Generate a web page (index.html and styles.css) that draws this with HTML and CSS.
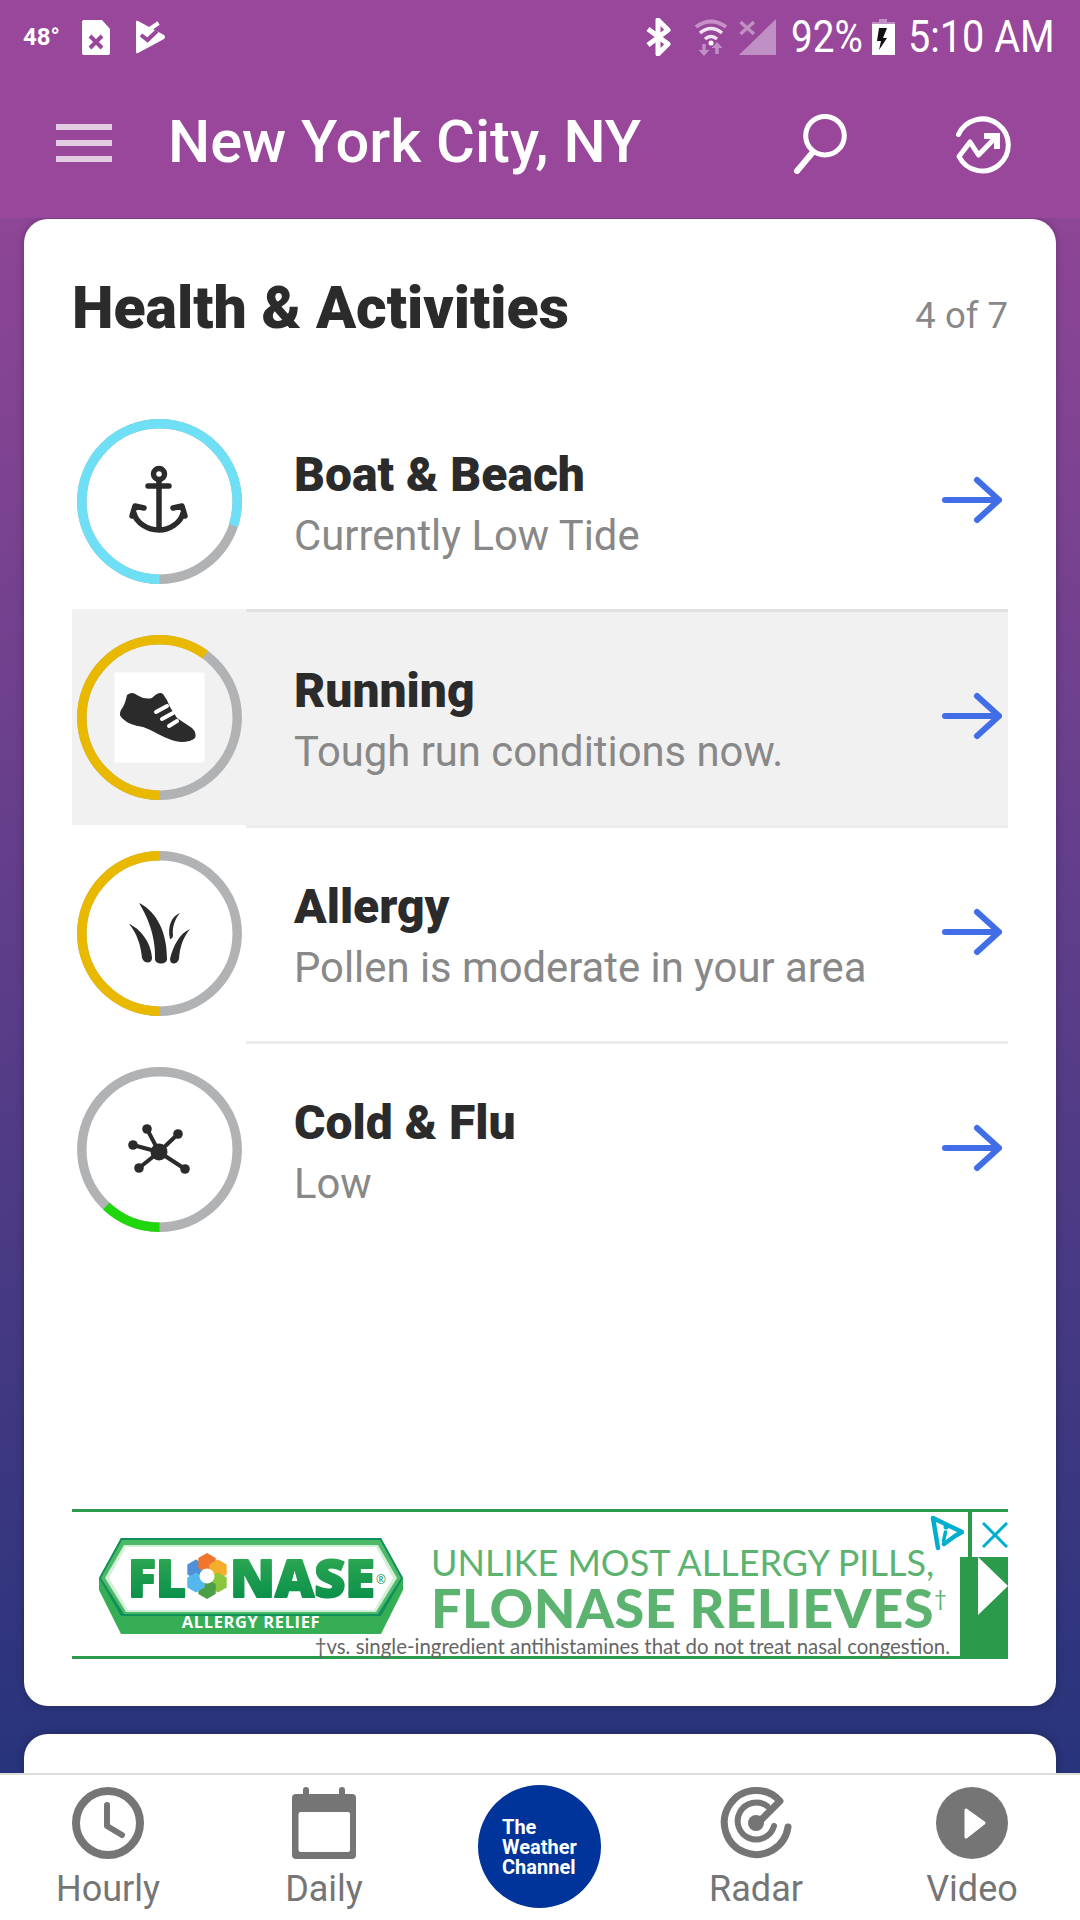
FILE: index.html
```html
<!DOCTYPE html>
<html lang="en">
<head>
<meta charset="utf-8">
<title>Health &amp; Activities</title>
<link rel="stylesheet" href="styles.css">
</head>
<body>
<div class="app">
  <div class="top">
    <div class="status">
      <span class="temp">48°</span>
      <svg class="st-sim" viewBox="0 0 28 35"><path class="w" d="M2 0H20L28 9V33Q28 35 26 35H2Q0 35 0 33V2Q0 0 2 0Z"/><path class="x" d="M8 16L20 28M20 16L8 28"/></svg>
      <svg class="st-check" viewBox="0 0 30 34"><path class="w" d="M1 2Q1 0 3 1L29 15Q31 17 29 19L3 33Q1 34 1 32Z"/><path class="x" d="M6 15L12.500 20L22 11"/><path class="arm" d="M12 11L23.500 3"/></svg>
      <div class="st-right">
        <svg class="st-bt" viewBox="0 0 26 38"><path class="ln" d="M3 11L23 26L13 36V2L23 12L3 27"/></svg>
        <svg class="st-wifi" viewBox="0 0 32 37"><path class="dim" d="M1 8Q16 -3 31 8"/><path class="wf" d="M5 14Q16 5 27 14M10 20Q16 15 22 20"/><circle class="w" cx="16" cy="24" r="2.500"/><path class="dim2" d="M9 25V32M22 35V28"/><path class="dimf" d="M3.500 31H14.500L9 37ZM16.500 29H27.500L22 23Z"/></svg>
        <svg class="st-signal" viewBox="0 0 37 36"><path class="dimf" d="M37 0V36H0Z"/><path class="dim3" d="M1.500 3L15 15M15 3L1.500 15"/></svg>
        <span class="st-text st-pct">92%</span>
        <svg class="st-bat" viewBox="0 0 23 36"><path class="dimf" d="M7 0H15V3H23V6H0V3H7Z"/><rect class="w" x="0" y="5" width="23" height="31"/><path class="bolt" d="M7 9H15L11 19H15L7 31L9 22H5Z"/></svg>
        <span class="st-text st-time">5:10 AM</span>
      </div>
    </div>
    <header class="bar">
      <div class="burger"><i></i><i></i><i></i></div>
      <h1 class="city">New York City, NY</h1>
      <svg class="bar-search" viewBox="0 0 56 60"><circle class="ln" cx="33" cy="21.700" r="19.300"/><path class="ln lc" d="M21 38L5 57"/></svg>
      <svg class="bar-share" viewBox="0 0 60 60"><path class="ln lc2" d="M2.500 20.500A26 26 0 1 1 3 42.500L14 28L22.500 41L40 23"/><path class="ln head" d="M28 22H41V35"/></svg>
    </header>
  </div>

  <main class="main">
    <section class="card card-health">
      <div class="card-head">
        <h2 class="card-title">Health &amp; Activities</h2>
        <span class="card-count">4 of 7</span>
      </div>
      <div class="list">
        <div class="row">
          <div class="ring">
            <svg viewBox="0 0 165 165">
              <circle class="track" cx="82.500" cy="82.500" r="77.700"/>
              <circle class="arc arc-cyan" cx="82.500" cy="82.500" r="77.700" pathLength="100" stroke-dasharray="80 100" transform="rotate(90 82.500 82.500)"/>
              <circle class="glyph-ln" cx="82" cy="55" r="5.500"/>
              <path class="glyph-ln" d="M71 67H92M82 62V111M57 94C59 104 71 111 82 111C92 111 104 104 106 94M55 97L58 87L67 89M108 97L105 87L96 89"/>
            </svg>
          </div>
          <div class="row-text"><div class="row-title">Boat &amp; Beach</div><div class="row-sub">Currently Low Tide</div></div>
          <svg class="go" viewBox="0 0 64 50"><path d="M4 25H58M36 5L58 25L36 45"/></svg>
        </div>
        <div class="row row-active">
          <div class="ring">
            <svg viewBox="0 0 165 165">
              <circle class="track" cx="82.500" cy="82.500" r="77.700"/>
              <circle class="arc arc-yellow" cx="82.500" cy="82.500" r="77.700" pathLength="100" stroke-dasharray="60 100" transform="rotate(90 82.500 82.500)"/>
              <rect class="tile" x="37.500" y="37.500" width="90" height="90"/>
              <path class="glyph" d="M50 60Q55 56 60 60Q68 65 75 63Q82 56 86 59Q90 64 93 72L100 83L115 93Q120 98 118 103Q114 107 104 107Q94 106 81 99Q72 94 66 92Q52 90 46 84Q41 80 44 75Q48 70 50 60Z"/>
              <path class="lace" d="M79 77L90 71M85 84L96 78M92 91L100 86"/>
            </svg>
          </div>
          <div class="row-text"><div class="row-title">Running</div><div class="row-sub">Tough run conditions now.</div></div>
          <svg class="go" viewBox="0 0 64 50"><path d="M4 25H58M36 5L58 25L36 45"/></svg>
        </div>
        <div class="row">
          <div class="ring">
            <svg viewBox="0 0 165 165">
              <circle class="track" cx="82.500" cy="82.500" r="77.700"/>
              <circle class="arc arc-yellow" cx="82.500" cy="82.500" r="77.700" pathLength="100" stroke-dasharray="50 100" transform="rotate(90 82.500 82.500)"/>
              <path class="glyph" d="M62 52C75 58 90 75 90 108C90 114 78 114 78 108C79 85 70 65 62 52Z"/>
              <path class="glyph" d="M52 73C62 77 74 90 75 107C75 113 67 113 65 107C64 95 60 82 52 73Z"/>
              <path class="glyph" d="M113 78C103 82 96 95 93 108C93 114 100 114 102 108C103 95 106 87 113 78Z"/>
              <path class="glyph" d="M103 62C95 65 90 75 93 88C95 88 96 86 96 84C95 76 98 68 103 62Z"/>
            </svg>
          </div>
          <div class="row-text"><div class="row-title">Allergy</div><div class="row-sub">Pollen is moderate in your area</div></div>
          <svg class="go" viewBox="0 0 64 50"><path d="M4 25H58M36 5L58 25L36 45"/></svg>
        </div>
        <div class="row">
          <div class="ring">
            <svg viewBox="0 0 165 165">
              <circle class="track" cx="82.500" cy="82.500" r="77.700"/>
              <circle class="arc arc-green" cx="82.500" cy="82.500" r="77.700" pathLength="100" stroke-dasharray="12 100" transform="rotate(90 82.500 82.500)"/>
              <path class="virus" d="M82 85L70 62M82 85L101 67M82 85L56 78M82 85L62 101M82 85L108 102"/>
              <circle class="glyph" cx="82" cy="85" r="8.500"/>
              <circle class="glyph" cx="70" cy="62" r="4.800"/><circle class="glyph" cx="101" cy="67" r="4.800"/><circle class="glyph" cx="56" cy="78" r="4.800"/><circle class="glyph" cx="62" cy="101" r="4.800"/><circle class="glyph" cx="108" cy="102" r="4.800"/>
            </svg>
          </div>
          <div class="row-text"><div class="row-title">Cold &amp; Flu</div><div class="row-sub">Low</div></div>
          <svg class="go" viewBox="0 0 64 50"><path d="M4 25H58M36 5L58 25L36 45"/></svg>
        </div>
      </div>

      <aside class="ad">
        <div class="ad-body">
          <div class="ad-main">
            <svg class="logo" viewBox="0 0 304 97">
              <defs>
                <linearGradient id="flo" x1="0" y1="0" x2="0" y2="1"><stop offset="0" stop-color="#39ae55"/><stop offset="1" stop-color="#008a48"/></linearGradient>
              </defs>
              <path class="l1" d="M0 40L22 0H282L304 40V52L282 96H22L0 52Z"/>
              <path class="l2" d="M0 40L22 0H282L304 40L282 78H22Z"/>
              <path class="l4" d="M2 40L23 2H281L302 40L279 76H25Z"/>
              <path class="l5" d="M6 40L25 7H279L298 40L277 74H27Z"/>
              <path class="l3" d="M10 40L27 9H277L294 40L275 72H29Z"/>
              <text class="logo-name" x="29" y="59" textLength="58" lengthAdjust="spacingAndGlyphs">FL</text>
              <text class="logo-name logo-o" x="89" y="59">O</text>
              <text class="logo-name" x="131" y="59" textLength="145" lengthAdjust="spacingAndGlyphs">NASE</text>
              <text class="logo-reg" x="277" y="46">®</text>
              <path class="p1" transform="translate(97 31.500)" d="M0 -10L8.700 -5V5L0 10L-8.700 5V-5Z"/>
              <path class="p2" transform="translate(108 25)" d="M0 -10L8.700 -5V5L0 10L-8.700 5V-5Z"/>
              <path class="p3" transform="translate(119 31.500)" d="M0 -10L8.700 -5V5L0 10L-8.700 5V-5Z"/>
              <path class="p4" transform="translate(119 44.500)" d="M0 -10L8.700 -5V5L0 10L-8.700 5V-5Z"/>
              <path class="p5" transform="translate(108 51)" d="M0 -10L8.700 -5V5L0 10L-8.700 5V-5Z"/>
              <path class="p6" transform="translate(97 44.500)" d="M0 -10L8.700 -5V5L0 10L-8.700 5V-5Z"/>
              <circle class="l3" cx="108" cy="38" r="7.500"/>
              <text class="logo-sub" x="152" y="90">ALLERGY RELIEF</text>
            </svg>
            <div class="ad-copy">
              <div class="ad-line1">UNLIKE MOST ALLERGY PILLS,</div>
              <div class="ad-line2">FLONASE RELIEVES<sup class="ad-dag">†</sup></div>
            </div>
          </div>
          <div class="ad-note">†vs. single-ingredient antihistamines that do not treat nasal congestion.</div>
        </div>
        <div class="ad-side">
          <div class="ad-close"><svg viewBox="0 0 26 26"><path d="M1 1L25 25M25 1L1 25"/></svg></div>
          <div class="ad-next"><svg viewBox="0 0 30 58"><path d="M0 0L30 29L0 58Z"/></svg></div>
        </div>
        <svg class="adchoice" viewBox="0 0 34 36"><path class="ac-ln" d="M14 29L25 21L32 17L3 3L8 33"/><circle class="ac-dot" cx="16" cy="12" r="2.500"/><path class="ac-ln2" d="M15.500 17L13.500 26"/></svg>
      </aside>
    </section>
    <section class="card card-next"></section>
  </main>

  <nav class="nav">
    <div class="tab">
      <svg class="tab-icon" viewBox="0 0 72 72"><circle class="ic-ln" cx="36" cy="36" r="32"/><path class="ic-ln2" d="M35 18V39L50 48"/></svg>
      <span class="tab-label">Hourly</span>
    </div>
    <div class="tab">
      <svg class="tab-icon" viewBox="0 0 72 72"><path class="ic-f" d="M8 7H64Q68 7 68 11V68Q68 72 64 72H8Q4 72 4 68V11Q4 7 8 7ZM12.500 25Q10.500 25 10.500 27V63Q10.500 65 12.500 65H60Q62 65 62 63V27Q62 25 60 25Z"/><path class="ic-ln2" d="M18 3V10M54 3V10"/></svg>
      <span class="tab-label">Daily</span>
    </div>
    <div class="tab tab-brand">
      <div class="brand"><span>The<br>Weather<br>Channel</span></div>
    </div>
    <div class="tab">
      <svg class="tab-icon" viewBox="0 0 72 72"><path class="ic-ln3" d="M68 40A32 32 0 1 1 60 14L42 32"/><path class="ic-ln3s" d="M54 39A18.500 18.500 0 1 1 47 19"/><circle class="ic-f" cx="36" cy="36" r="8"/></svg>
      <span class="tab-label">Radar</span>
    </div>
    <div class="tab">
      <svg class="tab-icon" viewBox="0 0 72 72"><circle class="ic-f" cx="36" cy="36" r="36"/><path class="ic-play" d="M30 23L48 36L30 50Z"/></svg>
      <span class="tab-label">Video</span>
    </div>
  </nav>
</div>
</body>
</html>
```

FILE: styles.css
```css
* { box-sizing: border-box; }
html, body { margin: 0; padding: 0; }
body { width: 1080px; height: 1920px; overflow: hidden; font-family: Roboto, "Liberation Sans", sans-serif; }
.app { width: 1080px; height: 1920px; display: flex; flex-direction: column; background: #fff; }

.top { background: #98479a; flex: none; }
.status { height: 72px; display: flex; align-items: center; padding: 2px 28px 0 23px; color: #fff; }
.temp { font-size: 24px; font-weight: 700; width: 59px; flex: none; }
.st-sim { width: 28px; height: 35px; flex: none; }
.st-check { width: 30px; height: 34px; margin-left: 25px; flex: none; }
.w { fill: #fff; }
.x { stroke: #98479a; stroke-width: 4; fill: none; }
.arm { stroke: #fff; stroke-width: 4; fill: none; }
.st-right { margin-left: auto; display: flex; align-items: center; }
.st-bt { width: 26px; height: 38px; flex: none; }
.ln { fill: none; stroke: #fff; stroke-width: 5; stroke-linejoin: round; }
.lc { stroke-linecap: round; stroke-width: 6; }
.lc2 { stroke-linecap: round; }
.head { stroke-width: 6; stroke-linejoin: miter; }
.st-wifi { width: 32px; height: 37px; margin-left: 24px; flex: none; }
.dim { fill: none; stroke: #c690c6; stroke-width: 4; }
.wf { fill: none; stroke: #f3e4f3; stroke-width: 3.500; }
.dimf { fill: #c08fc4; }
.dim2 { fill: none; stroke: #c08fc4; stroke-width: 3.500; }
.dim3 { fill: none; stroke: #c08fc4; stroke-width: 3.500; }
.st-text { font-size: 44px; font-weight: 400; line-height: 50px; white-space: nowrap; transform: scaleX(.88); transform-origin: left center; flex: none; }
.st-signal { width: 37px; height: 36px; margin-left: 12px; flex: none; }
.st-pct { margin-left: 15px; width: 70px; }
.st-bat { width: 23px; height: 36px; margin-left: 11px; flex: none; }
.bolt { fill: #111; }
.st-time { margin-left: 13px; width: 144px; transform: scaleX(.9); }

.bar { height: 146px; display: flex; align-items: center; padding: 0 0 2px 56px; }
.burger { width: 56px; display: flex; flex-direction: column; gap: 10px; flex: none; margin-bottom: 2px; }
.burger i { display: block; height: 6px; background: rgba(255,255,255,.72); }
.city { margin: 0 0 5px 56px; width: 624px; color: #fff; font-size: 59.500px; font-weight: 500; white-space: nowrap; }
.bar-search { width: 56px; height: 60px; flex: none; }
.bar-share { width: 60px; height: 60px; margin-left: 108px; flex: none; }

.main { flex: 1; min-height: 0; overflow: hidden; padding: 1px 24px 0; background: linear-gradient(#8e4696, #27347b); }
.card { background: #fff; border-radius: 24px; box-shadow: 0 0 8px rgba(0,0,0,.25); }
.card-health { height: 1487px; padding: 0 48px; }
.card-next { height: 120px; margin-top: 28px; }
.card-head { height: 174px; padding-top: 54px; display: flex; justify-content: space-between; align-items: baseline; }
.card-title { margin: 0; font-size: 59px; font-weight: 900; color: #2b2b2b; }
.card-count { font-size: 36.500px; color: #888; }

.row { height: 216px; display: flex; align-items: center; background-image: linear-gradient(#ececec, #ececec); background-repeat: no-repeat; background-position: 174px 0; background-size: 100% 3px; }
.row:first-child { background-image: none; }
.row-active { background-color: #f1f1f1; background-image: linear-gradient(#e2e2e2, #e2e2e2); }
.ring { width: 165px; height: 165px; margin-left: 5px; flex: none; }
.ring svg { display: block; width: 165px; height: 165px; }
.track { fill: none; stroke: #b1b2b4; stroke-width: 9.500; }
.arc { fill: none; stroke-width: 9.500; }
.arc-cyan { stroke: #6fdff5; }
.arc-yellow { stroke: #e9b900; }
.arc-green { stroke: #20d60c; }
.glyph { fill: #2b2b2b; }
.glyph-ln { fill: none; stroke: #2b2b2b; stroke-width: 5.500; stroke-linecap: round; stroke-linejoin: round; }
.tile { fill: #fff; }
.lace { fill: none; stroke: #fff; stroke-width: 4; stroke-linecap: round; }
.virus { fill: none; stroke: #2b2b2b; stroke-width: 4; }
.row-text { margin-left: 52px; flex: 1; padding: 8px 0 1px; }
.row-title { font-size: 48px; font-weight: 900; color: #2b2b2b; line-height: 54px; }
.row-sub { font-size: 41.800px; color: #888; line-height: 50px; margin-top: 9px; }
.go { width: 64px; height: 50px; margin: 0 3px 2px 0; flex: none; }
.go path { fill: none; stroke: #416ee6; stroke-width: 6; stroke-linecap: round; stroke-linejoin: round; }

.ad { margin-top: 252px; height: 150px; display: flex; border-top: 3px solid #2b9a4a; border-bottom: 3px solid #2b9a4a; position: relative; background: #fff; }
.ad-body { flex: 1; display: flex; flex-direction: column; min-width: 0; }
.ad-main { flex: 1; display: flex; padding: 26px 0 0 27px; }
.logo { width: 304px; height: 97px; flex: none; }
.l1 { fill: #35ae55; }
.l2 { fill: #0f8f5a; }
.l4 { fill: #4dba68; }
.l5 { fill: #d5eed8; }
.l3 { fill: #fff; }
.logo-name { font-family: "Open Sans", sans-serif; font-weight: 800; font-size: 52px; fill: url(#flo); stroke: url(#flo); stroke-width: 2; stroke-linejoin: round; }
.logo-o { fill: transparent; stroke: none; }
.logo-reg { font-size: 12px; fill: #15924a; font-family: "Open Sans", sans-serif; }
.p1 { fill: #4f90d8; }
.p2 { fill: #f0762d; }
.p3 { fill: #f5ae2c; }
.p4 { fill: #8cc63f; }
.p5 { fill: #4d9f45; }
.p6 { fill: #55b8ec; }
.logo-sub { font-family: "Open Sans", sans-serif; font-weight: 700; font-size: 16.500px; fill: #fff; text-anchor: middle; letter-spacing: .6px; }
.ad-copy { margin-left: 28px; color: #5cb370; white-space: nowrap; }
.ad-line1 { font-family: Lato, sans-serif; font-size: 36px; line-height: 41px; margin-top: 4px; }
.ad-line2 { font-family: Lato, sans-serif; font-weight: 900; font-size: 54px; letter-spacing: .5px; line-height: 50px; }
.ad-dag { font-size: 22px; font-weight: 400; vertical-align: 22px; line-height: 0; }
.ad-note { height: 21px; padding-right: 10px; text-align: right; font-family: Lato, sans-serif; font-size: 20.400px; line-height: 23px; color: #666; white-space: nowrap; }
.ad-side { width: 48px; flex: none; display: flex; flex-direction: column; }
.ad-close { height: 45px; margin-left: 8px; border-left: 4px solid #2b9a4a; padding: 10px 0 0 10px; }
.ad-close svg { display: block; width: 26px; height: 26px; }
.ad-close path { fill: none; stroke: #00aecd; stroke-width: 3; }
.ad-next { flex: 1; background: #2b9a4a; display: flex; justify-content: flex-end; align-items: flex-start; }
.ad-next svg { width: 30px; height: 58px; display: block; }
.ad-next path { fill: #fff; }
.adchoice { position: absolute; right: 44px; top: 3px; width: 34px; height: 36px; }
.ac-ln { fill: none; stroke: #00aecd; stroke-width: 4.500; stroke-linejoin: round; stroke-linecap: round; }
.ac-dot { fill: #00aecd; }
.ac-ln2 { fill: none; stroke: #00aecd; stroke-width: 3.500; stroke-linecap: round; }

.nav { height: 147px; flex: none; display: grid; grid-template-columns: repeat(5, 216px); background: #fff; border-top: 2px solid #dcdcdc; }
.tab { display: flex; flex-direction: column; align-items: center; padding-top: 12px; }
.tab-icon { width: 72px; height: 72px; flex: none; }
.tab-label { font-size: 36px; color: #757575; line-height: 44px; margin-top: 8px; }
.ic-ln { fill: none; stroke: #757575; stroke-width: 8; }
.ic-ln2 { fill: none; stroke: #757575; stroke-width: 6; stroke-linecap: round; stroke-linejoin: round; }
.ic-ln3 { fill: none; stroke: #757575; stroke-width: 7; stroke-linecap: round; stroke-linejoin: round; }
.ic-ln3s { fill: none; stroke: #757575; stroke-width: 6; stroke-linecap: round; }
.ic-f { fill: #757575; fill-rule: evenodd; }
.ic-play { fill: #fff; stroke: #fff; stroke-width: 3; stroke-linejoin: round; }
.tab-brand { padding-top: 10px; }
.brand { width: 123px; height: 123px; margin-right: 1px; border-radius: 50%; background: #00349b; color: #fff; display: flex; align-items: center; padding-left: 24px; font-size: 20px; font-weight: 700; line-height: 20px; }
```
